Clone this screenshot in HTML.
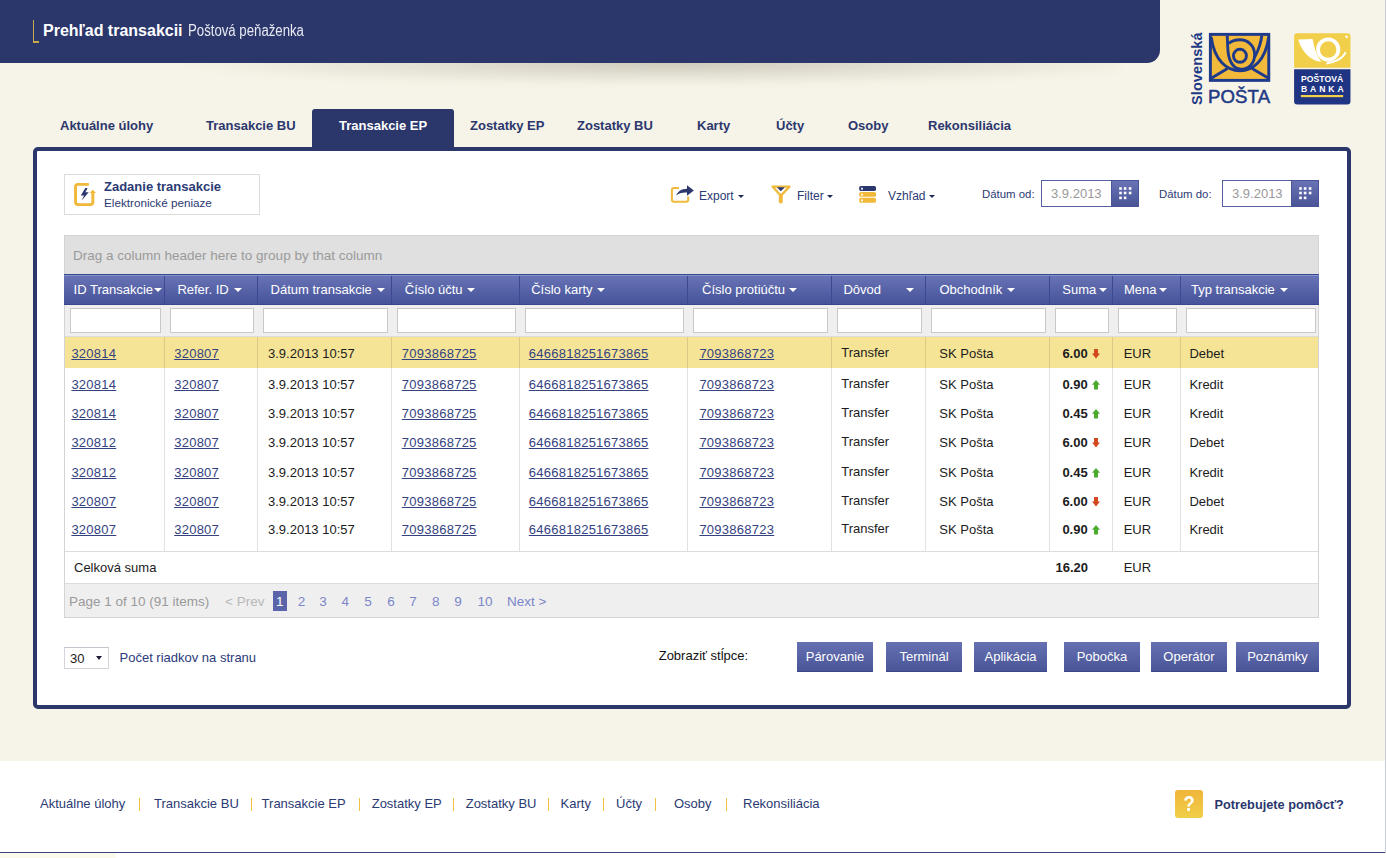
<!DOCTYPE html><html><head><meta charset="utf-8"><style>
*{box-sizing:border-box;margin:0;padding:0}
html,body{width:1386px;height:858px;overflow:hidden}
body{background:#f6f3e8;font-family:"Liberation Sans",sans-serif;position:relative;color:#000}
.a{position:absolute;white-space:nowrap;line-height:16px}
#hdr{position:absolute;left:0;top:0;width:1160px;height:63px;background:#2b366b;border-bottom-right-radius:13px}
#hshadow{position:absolute;left:120px;top:40px;width:1000px;height:46px;background:radial-gradient(ellipse 50% 50% at 55% 50%,rgba(60,55,30,.22),rgba(60,55,30,.08) 60%,rgba(60,55,30,0) 100%);filter:blur(3px)}
.brk{position:absolute;left:33px;top:20px;width:6px;height:23px;border-left:1px solid #c9a94b;border-bottom:2px solid #c9a94b}
.t1{left:43px;top:21px;font-size:16px;font-weight:bold;color:#fff;line-height:20px}
.t2{left:188px;top:21px;font-size:16px;color:#e8eaf2;line-height:20px;transform:scaleX(.825);transform-origin:0 0}
.tab{position:absolute;top:118px;font-size:13px;font-weight:bold;color:#2b376d;line-height:16px;white-space:nowrap}
#acttab{position:absolute;left:312px;top:109px;width:142px;height:40px;background:#2b366b;border-radius:3px 3px 0 0}
#panel{position:absolute;left:33px;top:147px;width:1318px;height:562px;border:4px solid #2b366b;border-radius:5px;background:#fff}
#footer{position:absolute;left:0;top:761px;width:1386px;height:92px;background:#fff;border-bottom:1px solid #3a4580}
#rline{position:absolute;left:1385px;top:0;width:1px;height:853px;background:#c9ccd6}
#botw{position:absolute;left:0;top:853px;width:1386px;height:5px;background:#fff}#botl{position:absolute;left:0;top:853px;width:116px;height:5px;background:#fbf8ec}
.zbox{position:absolute;left:64px;top:174px;width:196px;height:41px;border:1px solid #dcdcdc;background:#fff}
.navy{color:#2b3a73}
.tb{font-size:12px;color:#2b3a73}
.caret{position:absolute;width:0;height:0;border-left:3px solid transparent;border-right:3px solid transparent;border-top:3px solid #1e2a5a}
.din{position:absolute;top:180px;height:27px;border:1px solid #5560a0;background:#fff}
.dbtn{position:absolute;top:180px;height:27px;width:28px;background:linear-gradient(#6872b4,#4a5598);border:1px solid #4a5598}
.grid{position:absolute;left:64px;top:235px;width:1255px;height:383px;border:1px solid #d3d3d3;background:#fff}
.grp{position:absolute;left:65px;top:236px;width:1253px;height:38px;background:#e0e0e0}
.hdrrow{position:absolute;left:64px;top:274px;width:1255px;height:31px;background:linear-gradient(#6874b5,#47539a);border-top:1px solid #3a4690;border-bottom:1px solid #3a4690;box-shadow:inset 0 1px #8494cf}
.hsep{position:absolute;top:276px;width:1px;height:28px;background:#3d4890}
.ht{position:absolute;top:282px;font-size:13px;color:#fff;line-height:16px;white-space:nowrap}
.hcar{position:absolute;top:288px;width:0;height:0;border-left:4px solid transparent;border-right:4px solid transparent;border-top:4px solid #fff}
.hc{display:inline-block;width:0;height:0;border-left:4px solid transparent;border-right:4px solid transparent;border-top:4px solid #fff;vertical-align:middle;margin-left:4px;position:relative;top:-1px}
.frow{position:absolute;left:65px;top:305px;width:1253px;height:32px;background:#efefef;border-bottom:1px solid #dcdcdc}
.fin{position:absolute;top:308px;height:25px;border:1px solid #c8c8c8;background:#fff}
.hl{position:absolute;left:65px;top:337px;width:1253px;height:31px;background:#f6e496}
.vsep{position:absolute;top:337px;width:1px;height:214px;background:rgba(0,0,0,.115)}
.d{position:absolute;font-size:13px;line-height:16px;white-space:nowrap;color:#1c1c1c}
.lk{color:#34427f;text-decoration:underline;letter-spacing:.25px}
.b{font-weight:bold}
.ftr{position:absolute;left:65px;top:551px;width:1253px;height:32px;border-top:1px solid #dcdcdc;background:#fff}
.pgr{position:absolute;left:65px;top:583px;width:1253px;height:34px;background:#efefef;border-top:1px solid #dcdcdc}
.pg{position:absolute;top:594px;font-size:13px;line-height:16px;white-space:nowrap;color:#8a8a8a}
.btn{position:absolute;top:642px;height:30px;background:linear-gradient(#6571b3,#4a5597);border-bottom:1px solid #3a4688;color:#fff;font-size:13px;line-height:29px;text-align:center}
.fl{position:absolute;top:796px;font-size:13px;line-height:16px;color:#2b3a73;white-space:nowrap}
.fs{position:absolute;top:798px;width:1px;height:13px;background:#f0c040}
</style></head><body>
<div id="hshadow"></div><div id="hdr"></div><div class="brk"></div>
<div class="a t1">Prehľad transakcii</div><div class="a t2">Poštová peňaženka</div>

<div style="position:absolute;left:1191px;top:105px;transform:rotate(-90deg);transform-origin:0 0;font-size:14.5px;font-weight:bold;color:#1f3a85;line-height:12px;white-space:nowrap;letter-spacing:.1px">Slovenská</div>
<svg style="position:absolute;left:1206px;top:30px" width="68" height="56" viewBox="0 0 1042 858">
<rect x="67" y="67" width="895" height="705" fill="#f2b93a" stroke="#1e3a8a" stroke-width="45"/>
<g fill="none" stroke="#1e3a8a" stroke-width="44" stroke-linecap="butt">
<path d="M80,740 L330,590 M960,740 L705,590"/>
<path d="M80,110 C130,470 320,625 520,625 C720,625 910,470 960,110"/>
<circle cx="520" cy="395" r="100"/>
<path d="M325,85 L335,300 C350,520 450,600 530,600 C650,600 745,520 745,380 C745,230 630,150 520,150 C440,150 380,180 350,205"/>
<path d="M855,85 C835,250 790,330 745,420"/>
</g>
</svg>
<div style="position:absolute;left:1208px;top:87px;font-size:18.6px;color:#1f3a85;line-height:20px;white-space:nowrap;letter-spacing:.1px;-webkit-text-stroke:.5px #1f3a85">POŠTA</div>
<svg style="position:absolute;left:1290px;top:30px" width="64" height="78" viewBox="0 0 704 858">
<path d="M45,415 V70 Q45,35 80,35 H630 Q665,35 665,70 V415 Z" fill="#f2cf4b"/>
<path d="M45,432 V785 Q45,820 80,820 H630 Q665,820 665,785 V432 Z" fill="#1f3583"/>
<path d="M90,105 L250,100 C265,200 295,290 345,350 C240,345 130,250 90,105 Z" fill="#fff"/>
<circle cx="420" cy="215" r="112" fill="none" stroke="#fff" stroke-width="42"/>
<path d="M400,368 C480,362 575,320 612,245" fill="none" stroke="#fff" stroke-width="22"/>
<circle cx="622" cy="75" r="14" fill="#fff"/>
<rect x="120" y="715" width="465" height="24" fill="#f2cf4b"/>
</svg>
<div style="position:absolute;left:1301px;top:75px;font-size:8.6px;font-weight:bold;color:#fff;line-height:9px;white-space:nowrap;letter-spacing:.05px">POŠTOVÁ</div>
<div style="position:absolute;left:1301px;top:84.5px;font-size:8.6px;font-weight:bold;color:#fff;line-height:9px;white-space:nowrap;letter-spacing:2.9px">BANKA</div>

<div id="acttab"></div>
<div class="tab" style="left:60px">Aktuálne úlohy</div>
<div class="tab" style="left:206px">Transakcie BU</div>
<div class="tab" style="left:339px;color:#fff">Transakcie EP</div>
<div class="tab" style="left:470px">Zostatky EP</div>
<div class="tab" style="left:577px">Zostatky BU</div>
<div class="tab" style="left:697px">Karty</div>
<div class="tab" style="left:776px">Účty</div>
<div class="tab" style="left:848px">Osoby</div>
<div class="tab" style="left:928px">Rekonsiliácia</div>
<div id="panel"></div>
<div class="zbox"></div>

<svg style="position:absolute;left:60px;top:170px" width="100" height="50" viewBox="0 0 1386 693">
<path d="M400,200 H250 Q215,200 215,235 V445 Q215,480 250,480 H420 Q455,480 455,445 V300" fill="none" stroke="#f0b93a" stroke-width="40"/>
<path d="M410,320 L455,275 L500,320 Z" fill="#f0b93a"/>
<path d="M352,248 L288,352 L333,352 L300,422 L398,308 L352,308 L382,248 Z" fill="#2b376d"/>
</svg>

<div class="a b navy" style="left:104px;top:179px;font-size:13px">Zadanie transakcie</div>
<div class="a navy" style="left:104px;top:195px;font-size:11.7px">Elektronické peniaze</div>

<svg style="position:absolute;left:666px;top:180px" width="34" height="28" viewBox="0 0 34 28">
<path d="M13,8 H8 Q5.9,8 5.9,10 V19.7 Q5.9,21.7 8,21.7 H20.2 Q22.2,21.7 22.2,19.7 V16.6" fill="none" stroke="#f0b93a" stroke-width="2"/>
<path d="M10.1,15.6 C12,11.3 15.5,9 21,8.8 V5.2 L27.9,10.4 L21,15.7 V12.6 C16,12.4 12.8,13.3 10.1,15.6 Z" fill="#2b376d"/>
</svg>
<svg style="position:absolute;left:766px;top:180px" width="34" height="28" viewBox="0 0 34 28">
<path d="M6.5,6.6 H23.5 L14.8,15.7 Z" fill="none" stroke="#f0b93a" stroke-width="2.3" stroke-linejoin="round"/>
<path d="M14.8,15.5 V21.6" stroke="#f0b93a" stroke-width="3.9" stroke-linecap="round"/>
<path d="M10.8,7.3 H18.9 L14.8,11.3 Z" fill="#2b376d"/>
</svg>
<svg style="position:absolute;left:852px;top:180px" width="34" height="28" viewBox="0 0 34 28">
<rect x="7.2" y="6" width="16.8" height="4.9" rx="1.6" fill="#2b376d"/>
<rect x="7.2" y="11.9" width="16.8" height="4.9" rx="1.6" fill="#f0b93a"/>
<rect x="7.2" y="17.8" width="16.8" height="5" rx="1.6" fill="#f0b93a"/>
<rect x="9" y="7.7" width="2" height="2" fill="#fff" opacity=".85"/>
<rect x="9" y="13.6" width="2" height="2" fill="#fff" opacity=".85"/>
<rect x="9" y="19.5" width="2" height="2" fill="#fff" opacity=".85"/>
</svg>

<div class="a tb" style="left:699px;top:188px">Export</div><div class="caret" style="left:738px;top:195px"></div>
<div class="a tb" style="left:797px;top:188px">Filter</div><div class="caret" style="left:827px;top:195px"></div>
<div class="a tb" style="left:888px;top:188px">Vzhľad</div><div class="caret" style="left:929px;top:195px"></div>
<div class="a tb" style="left:982px;top:186px;font-size:11.4px">Dátum od:</div>
<div class="din" style="left:1041px;width:71px"></div><div class="dbtn" style="left:1111px"></div>
<div class="a" style="left:1051px;top:186px;font-size:13px;color:#999">3.9.2013</div>
<div class="a tb" style="left:1159px;top:186px;font-size:11.4px">Dátum do:</div>
<div class="din" style="left:1222px;width:70px"></div><div class="dbtn" style="left:1291px"></div>
<div class="a" style="left:1232px;top:186px;font-size:13px;color:#999">3.9.2013</div>
<svg style="position:absolute;left:1111px;top:180px" width="28" height="26" viewBox="0 0 28 26"><g fill="#fff"><rect x="8.2" y="7.2" width="2.6" height="2.6"/><rect x="12.8" y="7.2" width="2.6" height="2.6"/><rect x="17.8" y="7.2" width="2.6" height="2.6"/><rect x="8.2" y="11.7" width="2.6" height="2.6"/><rect x="12.8" y="11.7" width="2.6" height="2.6"/><rect x="17.8" y="11.7" width="2.6" height="2.6"/><rect x="8.2" y="16.6" width="2.6" height="2.6"/><rect x="12.8" y="16.6" width="2.6" height="2.6"/></g></svg><svg style="position:absolute;left:1291px;top:180px" width="28" height="26" viewBox="0 0 28 26"><g fill="#fff"><rect x="8.2" y="7.2" width="2.6" height="2.6"/><rect x="12.8" y="7.2" width="2.6" height="2.6"/><rect x="17.8" y="7.2" width="2.6" height="2.6"/><rect x="8.2" y="11.7" width="2.6" height="2.6"/><rect x="12.8" y="11.7" width="2.6" height="2.6"/><rect x="17.8" y="11.7" width="2.6" height="2.6"/><rect x="8.2" y="16.6" width="2.6" height="2.6"/><rect x="12.8" y="16.6" width="2.6" height="2.6"/></g></svg>
<div class="grid"></div><div class="grp"></div>
<div class="a" style="left:73px;top:248px;font-size:13.5px;color:#9a9a9a">Drag a column header here to group by that column</div>
<div class="hdrrow"></div>
<div class="hsep" style="left:164px"></div>
<div class="hsep" style="left:257px"></div>
<div class="hsep" style="left:391px"></div>
<div class="hsep" style="left:519px"></div>
<div class="hsep" style="left:687px"></div>
<div class="hsep" style="left:831px"></div>
<div class="hsep" style="left:925px"></div>
<div class="hsep" style="left:1049px"></div>
<div class="hsep" style="left:1112px"></div>
<div class="hsep" style="left:1180px"></div>
<div class="ht" style="left:73.6px">ID Transakcie</div>
<div class="ht" style="left:177.4px">Refer. ID</div>
<div class="ht" style="left:270.6px">Dátum transakcie</div>
<div class="ht" style="left:404.8px">Číslo účtu</div>
<div class="ht" style="left:531.2px">Číslo karty</div>
<div class="ht" style="left:702px">Číslo protiúčtu</div>
<div class="ht" style="left:843.4px">Dôvod</div>
<div class="ht" style="left:939.4px">Obchodník</div>
<div class="ht" style="left:1062.3px">Suma</div>
<div class="ht" style="left:1124px">Mena</div>
<div class="ht" style="left:1191px">Typ transakcie</div>
<div class="hcar" style="left:153.6px"></div>
<div class="hcar" style="left:233.7px"></div>
<div class="hcar" style="left:376.5px"></div>
<div class="hcar" style="left:466.6px"></div>
<div class="hcar" style="left:597.3px"></div>
<div class="hcar" style="left:788.6px"></div>
<div class="hcar" style="left:906.2px"></div>
<div class="hcar" style="left:1007px"></div>
<div class="hcar" style="left:1098.6px"></div>
<div class="hcar" style="left:1159px"></div>
<div class="hcar" style="left:1280px"></div>
<div class="frow"></div>
<div class="fin" style="left:69.5px;width:91.0px"></div>
<div class="fin" style="left:169.5px;width:84.0px"></div>
<div class="fin" style="left:262.5px;width:125.0px"></div>
<div class="fin" style="left:396.5px;width:119.0px"></div>
<div class="fin" style="left:524.5px;width:159.0px"></div>
<div class="fin" style="left:692.5px;width:135.0px"></div>
<div class="fin" style="left:836.5px;width:85.0px"></div>
<div class="fin" style="left:930.5px;width:115.0px"></div>
<div class="fin" style="left:1054.5px;width:54.0px"></div>
<div class="fin" style="left:1117.5px;width:59.0px"></div>
<div class="fin" style="left:1185.5px;width:130.0px"></div>
<div class="hl"></div>
<div class="vsep" style="left:164px"></div>
<div class="vsep" style="left:257px"></div>
<div class="vsep" style="left:391px"></div>
<div class="vsep" style="left:519px"></div>
<div class="vsep" style="left:687px"></div>
<div class="vsep" style="left:831px"></div>
<div class="vsep" style="left:925px"></div>
<div class="vsep" style="left:1049px"></div>
<div class="vsep" style="left:1112px"></div>
<div class="vsep" style="left:1180px"></div>
<div class="d lk" style="left:71.4px;top:346px">320814</div>
<div class="d lk" style="left:174.2px;top:346px">320807</div>
<div class="d" style="left:268px;top:346px">3.9.2013 10:57</div>
<div class="d lk" style="left:401.8px;top:346px">7093868725</div>
<div class="d lk" style="left:528.8px;top:346px">6466818251673865</div>
<div class="d lk" style="left:699.4px;top:346px">7093868723</div>
<div class="d" style="left:841.2px;top:345px">Transfer</div>
<div class="d" style="left:939.3px;top:346px">SK Pošta</div>
<div class="d b" style="left:1062.4px;top:346px">6.00</div>
<svg style="position:absolute;left:1092px;top:349px" width="8" height="10" viewBox="0 0 8 10"><path d="M2 0h4v4.6h2L4 9.4 0 4.6h2z" fill="#d2491d"/></svg>
<div class="d" style="left:1123.7px;top:346px">EUR</div>
<div class="d" style="left:1189.4px;top:346px">Debet</div>
<div class="d lk" style="left:71.4px;top:377px">320814</div>
<div class="d lk" style="left:174.2px;top:377px">320807</div>
<div class="d" style="left:268px;top:377px">3.9.2013 10:57</div>
<div class="d lk" style="left:401.8px;top:377px">7093868725</div>
<div class="d lk" style="left:528.8px;top:377px">6466818251673865</div>
<div class="d lk" style="left:699.4px;top:377px">7093868723</div>
<div class="d" style="left:841.2px;top:376px">Transfer</div>
<div class="d" style="left:939.3px;top:377px">SK Pošta</div>
<div class="d b" style="left:1062.4px;top:377px">0.90</div>
<svg style="position:absolute;left:1092px;top:380px" width="8" height="10" viewBox="0 0 8 10"><path d="M2 9.4h4V4.8h2L4 0 0 4.8h2z" fill="#4aab2c"/></svg>
<div class="d" style="left:1123.7px;top:377px">EUR</div>
<div class="d" style="left:1189.4px;top:377px">Kredit</div>
<div class="d lk" style="left:71.4px;top:406px">320814</div>
<div class="d lk" style="left:174.2px;top:406px">320807</div>
<div class="d" style="left:268px;top:406px">3.9.2013 10:57</div>
<div class="d lk" style="left:401.8px;top:406px">7093868725</div>
<div class="d lk" style="left:528.8px;top:406px">6466818251673865</div>
<div class="d lk" style="left:699.4px;top:406px">7093868723</div>
<div class="d" style="left:841.2px;top:405px">Transfer</div>
<div class="d" style="left:939.3px;top:406px">SK Pošta</div>
<div class="d b" style="left:1062.4px;top:406px">0.45</div>
<svg style="position:absolute;left:1092px;top:409px" width="8" height="10" viewBox="0 0 8 10"><path d="M2 9.4h4V4.8h2L4 0 0 4.8h2z" fill="#4aab2c"/></svg>
<div class="d" style="left:1123.7px;top:406px">EUR</div>
<div class="d" style="left:1189.4px;top:406px">Kredit</div>
<div class="d lk" style="left:71.4px;top:435px">320812</div>
<div class="d lk" style="left:174.2px;top:435px">320807</div>
<div class="d" style="left:268px;top:435px">3.9.2013 10:57</div>
<div class="d lk" style="left:401.8px;top:435px">7093868725</div>
<div class="d lk" style="left:528.8px;top:435px">6466818251673865</div>
<div class="d lk" style="left:699.4px;top:435px">7093868723</div>
<div class="d" style="left:841.2px;top:434px">Transfer</div>
<div class="d" style="left:939.3px;top:435px">SK Pošta</div>
<div class="d b" style="left:1062.4px;top:435px">6.00</div>
<svg style="position:absolute;left:1092px;top:438px" width="8" height="10" viewBox="0 0 8 10"><path d="M2 0h4v4.6h2L4 9.4 0 4.6h2z" fill="#d2491d"/></svg>
<div class="d" style="left:1123.7px;top:435px">EUR</div>
<div class="d" style="left:1189.4px;top:435px">Debet</div>
<div class="d lk" style="left:71.4px;top:465px">320812</div>
<div class="d lk" style="left:174.2px;top:465px">320807</div>
<div class="d" style="left:268px;top:465px">3.9.2013 10:57</div>
<div class="d lk" style="left:401.8px;top:465px">7093868725</div>
<div class="d lk" style="left:528.8px;top:465px">6466818251673865</div>
<div class="d lk" style="left:699.4px;top:465px">7093868723</div>
<div class="d" style="left:841.2px;top:464px">Transfer</div>
<div class="d" style="left:939.3px;top:465px">SK Pošta</div>
<div class="d b" style="left:1062.4px;top:465px">0.45</div>
<svg style="position:absolute;left:1092px;top:468px" width="8" height="10" viewBox="0 0 8 10"><path d="M2 9.4h4V4.8h2L4 0 0 4.8h2z" fill="#4aab2c"/></svg>
<div class="d" style="left:1123.7px;top:465px">EUR</div>
<div class="d" style="left:1189.4px;top:465px">Kredit</div>
<div class="d lk" style="left:71.4px;top:494px">320807</div>
<div class="d lk" style="left:174.2px;top:494px">320807</div>
<div class="d" style="left:268px;top:494px">3.9.2013 10:57</div>
<div class="d lk" style="left:401.8px;top:494px">7093868725</div>
<div class="d lk" style="left:528.8px;top:494px">6466818251673865</div>
<div class="d lk" style="left:699.4px;top:494px">7093868723</div>
<div class="d" style="left:841.2px;top:493px">Transfer</div>
<div class="d" style="left:939.3px;top:494px">SK Pošta</div>
<div class="d b" style="left:1062.4px;top:494px">6.00</div>
<svg style="position:absolute;left:1092px;top:497px" width="8" height="10" viewBox="0 0 8 10"><path d="M2 0h4v4.6h2L4 9.4 0 4.6h2z" fill="#d2491d"/></svg>
<div class="d" style="left:1123.7px;top:494px">EUR</div>
<div class="d" style="left:1189.4px;top:494px">Debet</div>
<div class="d lk" style="left:71.4px;top:522px">320807</div>
<div class="d lk" style="left:174.2px;top:522px">320807</div>
<div class="d" style="left:268px;top:522px">3.9.2013 10:57</div>
<div class="d lk" style="left:401.8px;top:522px">7093868725</div>
<div class="d lk" style="left:528.8px;top:522px">6466818251673865</div>
<div class="d lk" style="left:699.4px;top:522px">7093868723</div>
<div class="d" style="left:841.2px;top:521px">Transfer</div>
<div class="d" style="left:939.3px;top:522px">SK Pošta</div>
<div class="d b" style="left:1062.4px;top:522px">0.90</div>
<svg style="position:absolute;left:1092px;top:525px" width="8" height="10" viewBox="0 0 8 10"><path d="M2 9.4h4V4.8h2L4 0 0 4.8h2z" fill="#4aab2c"/></svg>
<div class="d" style="left:1123.7px;top:522px">EUR</div>
<div class="d" style="left:1189.4px;top:522px">Kredit</div>
<div class="ftr"></div>
<div class="d" style="left:74px;top:560px">Celková suma</div>
<div class="d b" style="left:1055.5px;top:560px">16.20</div>
<div class="d" style="left:1123.7px;top:560px">EUR</div>
<div class="pgr"></div>
<div class="pg" style="left:69px;font-size:13.5px;color:#9a9a9a">Page 1 of 10 (91 items)</div><div class="pg" style="left:225px;font-size:13.5px;color:#b8b8b8">&lt; Prev</div><div style="position:absolute;left:273px;top:591px;width:14px;height:20px;background:#5a64a8"></div><div class="pg" style="left:276px;font-size:13.5px;color:#fff">1</div><div class="pg" style="left:297.7px;font-size:13.5px;color:#7b86c8">2</div><div class="pg" style="left:319.3px;font-size:13.5px;color:#7b86c8">3</div><div class="pg" style="left:341.4px;font-size:13.5px;color:#7b86c8">4</div><div class="pg" style="left:364.2px;font-size:13.5px;color:#7b86c8">5</div><div class="pg" style="left:387.2px;font-size:13.5px;color:#7b86c8">6</div><div class="pg" style="left:409.3px;font-size:13.5px;color:#7b86c8">7</div><div class="pg" style="left:432px;font-size:13.5px;color:#7b86c8">8</div><div class="pg" style="left:454.3px;font-size:13.5px;color:#7b86c8">9</div><div class="pg" style="left:477.4px;font-size:13.5px;color:#7b86c8">10</div><div class="pg" style="left:507.1px;font-size:13.5px;color:#7b86c8">Next &gt;</div>
<div style="position:absolute;left:63.5px;top:647px;width:45px;height:22px;border:1px solid #d3d5da;border-top-color:#c2c5cc;background:#fff"></div>
<div class="d" style="left:70px;top:651px">30</div><div class="caret" style="left:95.7px;top:656px;border-top-color:#1e1e3a;border-left-width:3.7px;border-right-width:3.7px;border-top-width:4.3px"></div>
<div class="d" style="left:119.5px;top:650px;color:#2b3a7a">Počet riadkov na stranu</div>
<div class="d" style="left:658.7px;top:648px;color:#111">Zobraziť stĺpce:</div>
<div class="btn" style="left:797px;width:76px">Párovanie</div>
<div class="btn" style="left:886px;width:76px">Terminál</div>
<div class="btn" style="left:974px;width:73px">Aplikácia</div>
<div class="btn" style="left:1064px;width:76px">Pobočka</div>
<div class="btn" style="left:1151px;width:76px">Operátor</div>
<div class="btn" style="left:1236px;width:83px">Poznámky</div>
<div id="footer"></div><div id="rline"></div><div id="botw"></div><div id="botl"></div>
<div class="fl" style="left:40px">Aktuálne úlohy</div>
<div class="fl" style="left:154px">Transakcie BU</div>
<div class="fl" style="left:261.6px">Transakcie EP</div>
<div class="fl" style="left:371.7px">Zostatky EP</div>
<div class="fl" style="left:465.7px">Zostatky BU</div>
<div class="fl" style="left:560.6px">Karty</div>
<div class="fl" style="left:616px">Účty</div>
<div class="fl" style="left:674px">Osoby</div>
<div class="fl" style="left:743px">Rekonsiliácia</div>
<div class="fs" style="left:139px"></div>
<div class="fs" style="left:251px"></div>
<div class="fs" style="left:359px"></div>
<div class="fs" style="left:453px"></div>
<div class="fs" style="left:548px"></div>
<div class="fs" style="left:603px"></div>
<div class="fs" style="left:655px"></div>
<div class="fs" style="left:726px"></div>

<div style="position:absolute;left:1175px;top:790px;width:28px;height:28px;border-radius:3px;background:linear-gradient(#f0b53a,#f0cf48)"></div>
<div style="position:absolute;left:1175px;top:791px;width:28px;text-align:center;font-size:22px;font-weight:bold;color:#fff;line-height:26px;transform:scaleX(.85)">?</div>
<div style="position:absolute;left:1214.5px;top:797px;font-size:12.75px;font-weight:bold;color:#2a376e;line-height:16px;white-space:nowrap">Potrebujete pomôcť?</div>

</body></html>
